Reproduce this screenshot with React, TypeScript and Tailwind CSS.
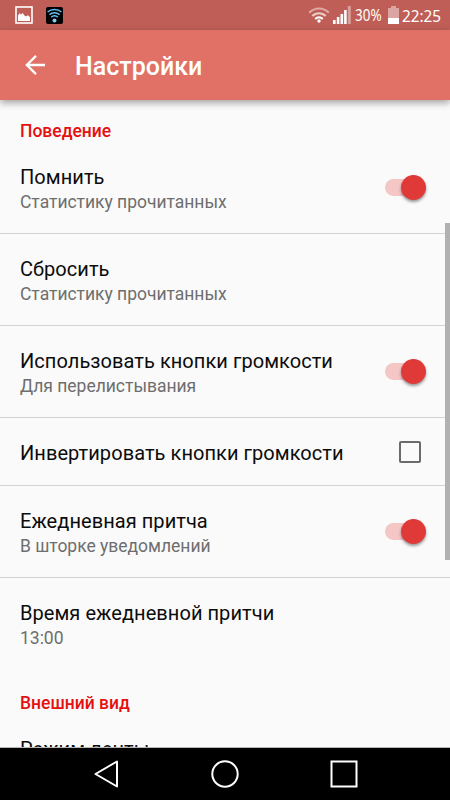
import React from "react";

type Control = "switch" | "checkbox";

interface PreferenceProps {
  title: string;
  summary?: string;
  control?: Control;
  last?: boolean;
}

const preferences: PreferenceProps[] = [
  { title: "Помнить", summary: "Статистику прочитанных", control: "switch" },
  { title: "Сбросить", summary: "Статистику прочитанных" },
  {
    title: "Использовать кнопки громкости",
    summary: "Для перелистывания",
    control: "switch",
  },
  { title: "Инвертировать кнопки громкости", control: "checkbox" },
  {
    title: "Ежедневная притча",
    summary: "В шторке уведомлений",
    control: "switch",
  },
  { title: "Время ежедневной притчи", summary: "13:00", last: true },
];

const PictureIcon = () => (
  <svg className="w-[18px] h-[18px]" viewBox="0 0 18 18" fill="none">
    <rect x="1" y="1" width="16" height="16" stroke="#fff" strokeWidth="1.6" />
    <path
      d="M3 15V9.5L4.6 7.2L6 8.6L7.6 7L9.5 9.6L11 10.4L13 9.3L15 11.2V15Z"
      fill="#fff"
    />
  </svg>
);

const HotspotIcon = () => (
  <svg className="w-[17px] h-[17px]" viewBox="0 0 17 17" fill="none">
    <rect width="17" height="17" rx="2" fill="#000" />
    <g stroke="#62bdf0" strokeWidth="1.5">
      <path d="M1.6 5C5.2 1.5 11.8 1.5 15.4 5" />
      <path d="M3.4 7.8C6.2 5 10.8 5 13.6 7.8" />
      <path d="M5.2 10.2C7 8.4 10 8.4 11.8 10.2" />
    </g>
    <circle cx="8.5" cy="13.4" r="2" fill="#7fd0f8" />
  </svg>
);

const WifiIcon = () => (
  <svg className="w-[22px] h-4" viewBox="0 0 22 16" fill="none">
    <g strokeWidth="2">
      <path d="M1.2 5.8C6.6 0.2 15.4 0.2 20.8 5.8" stroke="#dfa9a5" />
      <path d="M4.3 9C8 5.2 14 5.2 17.7 9" stroke="#eccac8" />
      <path d="M7.2 12C9.4 9.8 12.6 9.8 14.8 12" stroke="#fff" />
    </g>
    <circle cx="11" cy="14" r="1.7" fill="#fff" />
  </svg>
);

const SignalIcon = () => (
  <svg className="w-[18px] h-[18px]" viewBox="0 0 18 18">
    <g fill="#fff">
      <rect x="0" y="14" width="2.6" height="4" />
      <rect x="3.8" y="11" width="2.6" height="7" />
      <rect x="7.5" y="8" width="2.6" height="10" />
      <rect x="11.1" y="4" width="2.6" height="14" />
    </g>
    <rect x="14.8" y="0" width="3" height="18" fill="#d9a09b" />
  </svg>
);

const BatteryIcon = () => (
  <svg className="w-[11px] h-[18px]" viewBox="0 0 11 18">
    <path d="M3 0H8V2H11V18H0V2H3Z" fill="#dda5a1" />
    <rect y="12" width="11" height="6" fill="#fff" />
  </svg>
);

const BackIcon = () => (
  <svg className="w-5 h-5" viewBox="0 0 20 20" fill="none">
    <path d="M20 10H2M11 0.9L1.8 10L11 19.1" stroke="#fff" strokeWidth="2.3" />
  </svg>
);

const Switch = () => (
  <div className="relative w-[42px] h-[26px] flex items-center">
    <div className="w-[34px] h-[17px] rounded-full bg-[#f5c6c6]" />
    <div className="absolute right-px top-0 w-[25px] h-[25px] rounded-full bg-[#e03a38] shadow-[0_2px_3px_rgba(0,0,0,0.4)]" />
  </div>
);

const Checkbox = () => (
  <div className="w-[22px] h-[22px] mr-[6px] rounded-[2px] border-2 border-[#6b6b6b]" />
);

const Category = ({ title }: { title: string }) => (
  <h2 className="px-5 h-6 pt-px leading-6 text-[17.5px] font-medium text-[#e51010]">
    {title}
  </h2>
);

const Preference = ({ title, summary, control, last }: PreferenceProps) => (
  <div
    className={`flex shrink-0 items-center justify-between border-b pl-5 pr-[23px] ${
      summary ? "h-[92px]" : "h-[68px]"
    } ${last ? "border-transparent" : "border-[#d2d2d2]"}`}
  >
    <div className={summary ? "pt-[3px]" : "pt-[3px]"}>
      <div className="text-[20px] leading-6 tracking-[0.06px] text-[#0c0c0c]">
        {title}
      </div>
      {summary && (
        <div className="mt-px text-[17.5px] leading-6 tracking-[-0.02px] text-[#6e6e6e]">
          {summary}
        </div>
      )}
    </div>
    {control === "switch" && <Switch />}
    {control === "checkbox" && <Checkbox />}
  </div>
);

const StatusBar = () => (
  <div className="flex h-[30px] shrink-0 items-center justify-between bg-[#bf5e57] pl-[15px] pr-2 text-white">
    <div className="flex items-center gap-[13px]">
      <PictureIcon />
      <HotspotIcon />
    </div>
    <div className="flex items-center font-['Noto_Sans',sans-serif]">
      <WifiIcon />
      <div className="ml-[3px] flex">
        <SignalIcon />
      </div>
      <span className="ml-1 w-[33px] origin-left scale-x-[0.84] text-[16px] leading-none">
        30%
      </span>
      <BatteryIcon />
      <span className="ml-[3px] w-10 origin-left scale-x-[0.9] text-[17px] leading-none">
        22:25
      </span>
    </div>
  </div>
);

const NavigationBar = () => (
  <nav className="h-[52px] shrink-0 bg-black">
    <svg
      className="w-[450px] h-[52px]"
      viewBox="0 0 450 52"
      fill="none"
      stroke="#fff"
      strokeWidth="2"
    >
      <path d="M95.5 26L117 13.5V38.5Z" strokeLinejoin="round" />
      <circle cx="225" cy="26" r="12.7" />
      <rect x="331.5" y="13.5" width="25" height="25" />
    </svg>
  </nav>
);

const App = () => {
  return (
    <div className="flex h-[800px] w-[450px] flex-col overflow-hidden bg-[#fafafa] font-[Roboto,sans-serif]">
      <StatusBar />
      <header className="z-10 flex h-[70px] shrink-0 items-center bg-[#e17167] pl-[25px] shadow-[0_3px_7px_rgba(0,0,0,0.35)]">
        <BackIcon />
        <h1 className="ml-[30px] pt-[3px] text-[25px] font-medium text-white">
          Настройки
        </h1>
      </header>

      <main className="relative min-h-0 flex-1 overflow-hidden border-b border-[#b5b5b5] pt-[18px]">
        <Category title="Поведение" />
        {preferences.map((preference) => (
          <Preference key={preference.title} {...preference} />
        ))}
        <div className="pt-5">
          <Category title="Внешний вид" />
        </div>
        <Preference title="Режим ленты" last />

        {/* Scroll indicator */}
        <div className="absolute right-0 top-[123px] h-[337px] w-[5px] bg-[#b1b1b1]" />
      </main>

      <NavigationBar />
    </div>
  );
};

export default App;
